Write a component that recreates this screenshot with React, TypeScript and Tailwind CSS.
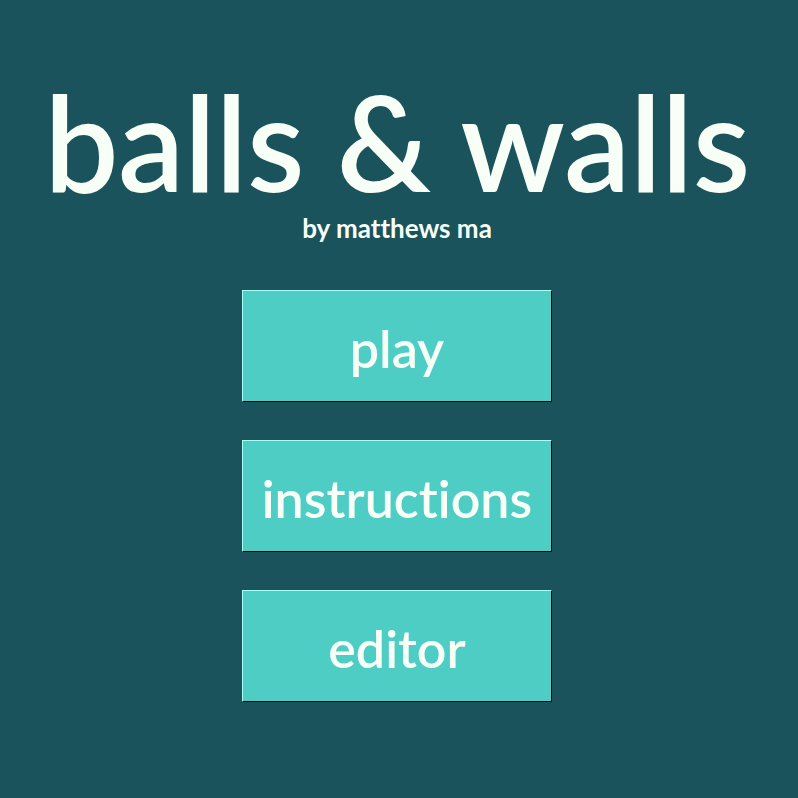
const buttons = ["play", "instructions", "editor"];

export default function App() {
  return (
    <div
      className="w-[798px] h-[798px] bg-[#1a535c] flex flex-col items-center pr-[4px] text-[#f7fff7] [font-variant-ligatures:none]"
      style={{ fontFamily: "Lato, 'Open Sans', sans-serif" }}
    >
      <h1 className="mt-[69px] text-[132px] leading-[144px] font-semibold tracking-[-0.5px]">
        balls &amp; walls
      </h1>
      <p className="text-[26px] font-bold leading-[30px]">by matthews ma</p>

      <div className="mt-[47px] flex flex-col gap-[38px]">
        {buttons.map((b) => (
          <button
            key={b}
            className="w-[310px] h-[112px] bg-[#4ecdc4] border border-t-[#a6fff8] border-l-[#a6fff8] border-r-black border-b-black text-[52px] font-semibold text-[#f7fff7] flex items-center justify-center pt-[3px]"
          >
            {b}
          </button>
        ))}
      </div>
    </div>
  );
}
